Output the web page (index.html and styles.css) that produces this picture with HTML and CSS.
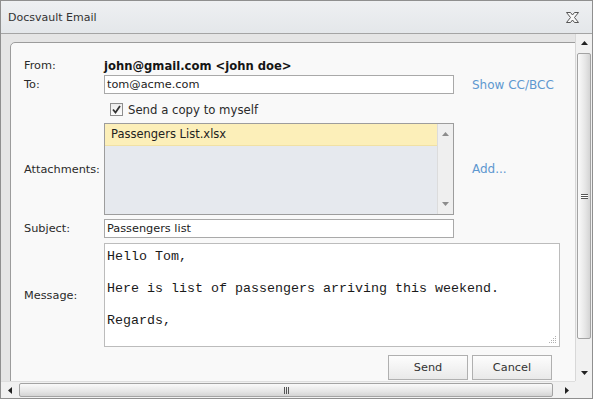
FILE: index.html
```html
<!DOCTYPE html>
<html>
<head>
<meta charset="utf-8">
<link rel="stylesheet" href="styles.css">
</head>
<body>
<div class="window">
  <div class="titlebar">
    <span class="title">Docsvault Email</span>
    <svg class="close" width="13" height="11" viewBox="-0.5 -0.5 13 11"><polygon points="0,0 4,0 6,2.5 8,0 12,0 8,5 12,10 8,10 6,7.5 4,10 0,10 4,5" fill="#f8f8f8" stroke="#555" stroke-width="1" stroke-linejoin="miter"/></svg>
  </div>
  <div class="body">
    <div class="viewport">
      <div class="panel">
        <div class="form">
          <div class="row r-from"><span class="label">From:</span><span class="from-value">john@gmail.com &lt;john doe&gt;</span></div>
          <div class="row r-to"><span class="label">To:</span><div class="input">tom@acme.com</div><span class="link">Show CC/BCC</span></div>
          <div class="row r-check"><span class="label"></span><span class="checkbox"><svg width="9" height="9" viewBox="0 0 9 9"><path d="M1 4.5 L3.5 7.5 L8 1" fill="none" stroke="#333" stroke-width="1.8"/></svg></span><span class="check-text">Send a copy to myself</span></div>
          <div class="row r-attach">
            <span class="label">Attachments:</span>
            <div class="listbox">
              <div class="list"><div class="item selected">Passengers List.xlsx</div></div>
              <div class="lb-scroll">
                <svg width="7" height="4" viewBox="0 0 7 4"><polygon points="0,4 3.5,0 7,4" fill="#8c8c8c"/></svg>
                <svg width="7" height="4" viewBox="0 0 7 4"><polygon points="0,0 7,0 3.5,4" fill="#8c8c8c"/></svg>
              </div>
            </div>
            <span class="link">Add...</span>
          </div>
          <div class="row r-subject"><span class="label">Subject:</span><div class="input">Passengers list</div></div>
          <div class="row r-message"><span class="label">Message:</span><div class="message">Hello Tom,

Here is list of passengers arriving this weekend.

Regards,<svg class="grip" width="9" height="9" viewBox="0 0 9 9"><g fill="#b0b0b0"><rect x="7" y="1" width="1" height="1"/><rect x="5" y="3" width="1" height="1"/><rect x="7" y="3" width="1" height="1"/><rect x="3" y="5" width="1" height="1"/><rect x="5" y="5" width="1" height="1"/><rect x="7" y="5" width="1" height="1"/><rect x="1" y="7" width="1" height="1"/><rect x="3" y="7" width="1" height="1"/><rect x="5" y="7" width="1" height="1"/><rect x="7" y="7" width="1" height="1"/></g></svg></div></div>
          <div class="row r-buttons"><div class="btn">Send</div><div class="btn">Cancel</div></div>
        </div>
      </div>
    </div>
    <div class="vscroll">
      <div class="arrow-box"><svg width="7" height="4" viewBox="0 0 7 4"><polygon points="0,4 3.5,0 7,4" fill="#222"/></svg></div>
      <div class="vthumb"><span class="hgrip"></span></div>
      <div class="spacer"></div>
      <div class="arrow-box"><svg width="7" height="4" viewBox="0 0 7 4"><polygon points="0,0 7,0 3.5,4" fill="#222"/></svg></div>
    </div>
    <div class="hscroll">
      <div class="arrow-box"><svg width="4" height="7" viewBox="0 0 4 7"><polygon points="4,0 4,7 0,3.5" fill="#222"/></svg></div>
      <div class="hthumb"><span class="vgrip"></span></div>
      <div class="spacer"></div>
      <div class="arrow-box"><svg width="4" height="7" viewBox="0 0 4 7"><polygon points="0,0 0,7 4,3.5" fill="#222"/></svg></div>
    </div>
    <div class="corner"></div>
  </div>
</div>
</body>
</html>
```
FILE: styles.css
```css
* { box-sizing: border-box; }
html, body { margin: 0; padding: 0; background: #ffffff; }
body {
  font-family: "DejaVu Sans", Verdana, sans-serif;
  font-size: 11px;
  color: #2a2a2a;
}
.window {
  width: 593px;
  height: 399px;
  border: 1px solid #8f8f8f;
  display: flex;
  flex-direction: column;
  background: #e6e6e6;
}
.titlebar {
  flex: none;
  height: 33px;
  display: flex;
  align-items: center;
  justify-content: space-between;
  padding: 0 13px 0 7px;
  background: linear-gradient(#eef0f2, #e4e7ea);
  border-bottom: 1px solid #a4a4a4;
}
.title { color: #333; font-size: 11px; }
.close { display: block; }
.body {
  flex: 1;
  min-height: 0;
  display: grid;
  grid-template-columns: 1fr 17px;
  grid-template-rows: 1fr 17px;
}
.viewport {
  overflow: hidden;
  padding: 8px 0 0 9px;
  background: #e5e5e5;
}
.panel {
  width: 600px;
  height: 420px;
  background: #f9f9f9;
  border: 1px solid #9c9c9c;
  border-radius: 5px 0 0 0;
  padding: 13px 0 0 13px;
}
.form { width: 536px; }
.row { display: flex; align-items: center; }
.label { width: 80px; flex: none; font-size: 11.3px; }
.r-from { height: 19px; }
.from-value { font-weight: bold; color: #151515; font-size: 11.6px; }
.r-to { height: 19px; }
.input {
  width: 350px;
  height: 19px;
  flex: none;
  border: 1px solid #a9a9a9;
  background: #fff;
  padding: 0 2px;
  line-height: 17px;
  color: #222;
  font-size: 11.3px;
}
.link { color: #5e98d0; margin-left: 18px; font-size: 12px; }
.r-check { margin-top: 7px; height: 17px; }
.check-text { font-size: 11.7px; }
.checkbox {
  width: 13px;
  height: 13px;
  flex: none;
  margin: 0 5px 0 6px;
  border: 1px solid #8e8e8e;
  background: linear-gradient(#ececec, #fdfdfd);
  display: flex;
  align-items: center;
  justify-content: center;
}
.checkbox svg { display: block; }
.r-attach { margin-top: 5px; height: 92px; }
.listbox {
  width: 350px;
  height: 92px;
  flex: none;
  border: 1px solid #9d9d9d;
  display: flex;
  background: #e6e9ee;
}
.list { flex: 1; }
.item.selected {
  height: 22px;
  background: #fcefb9;
  border-bottom: 1px solid #f1e1a4;
  padding-left: 6px;
  line-height: 20px;
  color: #222;
  font-size: 11.5px;
}
.lb-scroll {
  width: 16px;
  flex: none;
  background: #efefef;
  border-left: 1px solid #dcdcdc;
  display: flex;
  flex-direction: column;
  justify-content: space-between;
  align-items: center;
  padding: 8px 0 8px;
}
.lb-scroll svg { display: block; }
.r-subject { margin-top: 4px; height: 19px; }
.r-message { margin-top: 5px; height: 104px; }
.message {
  position: relative;
  width: 456px;
  height: 104px;
  flex: none;
  border: 1px solid #bcbcbc;
  background: #fff;
  font-family: "Liberation Mono", "Courier New", monospace;
  font-size: 13.33px;
  line-height: 16px;
  padding: 5px 2px 0;
  white-space: pre;
  color: #1a1a1a;
}
.grip { position: absolute; right: 2px; bottom: 2px; }
.r-buttons {
  margin-top: 8px;
  height: 25px;
  justify-content: flex-end;
  padding-right: 8px;
  gap: 4px;
}
.btn {
  width: 80px;
  height: 25px;
  border: 1px solid #b0b0b0;
  background: linear-gradient(#fdfdfd, #e9e9e9);
  color: #333;
  display: flex;
  align-items: center;
  justify-content: center;
  font-size: 11.3px;
}
.vscroll {
  background: #f1f1f1;
  border-left: 1px solid #d8d8d8;
  display: flex;
  flex-direction: column;
  align-items: center;
}
.arrow-box {
  flex: none;
  width: 17px;
  height: 17px;
  display: flex;
  align-items: center;
  justify-content: center;
}
.arrow-box svg { display: block; }
.vthumb {
  flex: none;
  margin-top: 2px;
  width: 14px;
  height: 286px;
  border: 1px solid #a3a3a3;
  border-radius: 2px;
  background: linear-gradient(90deg, #fafafa, #e6e6e6 60%, #d4d4d4);
  display: flex;
  align-items: center;
  justify-content: center;
}
.hgrip {
  width: 7px;
  height: 5px;
  border-top: 1px solid #555;
  border-bottom: 1px solid #555;
  background: linear-gradient(#fff 0, #fff 1px, #555 1px, #555 2px, #fff 2px);
  background-size: 100% 3px;
  background-repeat: no-repeat;
  background-position: 0 0;
}
.spacer { flex: 1; }
.hscroll {
  background: #f1f1f1;
  border-top: 1px solid #dedede;
  display: flex;
  align-items: center;
}
.hthumb {
  flex: none;
  margin-left: 1px;
  width: 534px;
  height: 14px;
  border: 1px solid #a3a3a3;
  border-radius: 2px;
  background: linear-gradient(#fafafa, #e6e6e6 60%, #d4d4d4);
  display: flex;
  align-items: center;
  justify-content: center;
}
.vgrip {
  width: 5px;
  height: 7px;
  border-left: 1px solid #555;
  border-right: 1px solid #555;
  background: linear-gradient(90deg, transparent 1px, #555 1px, #555 2px, transparent 2px);
}
.corner { background: #f1f1f1; }
```
